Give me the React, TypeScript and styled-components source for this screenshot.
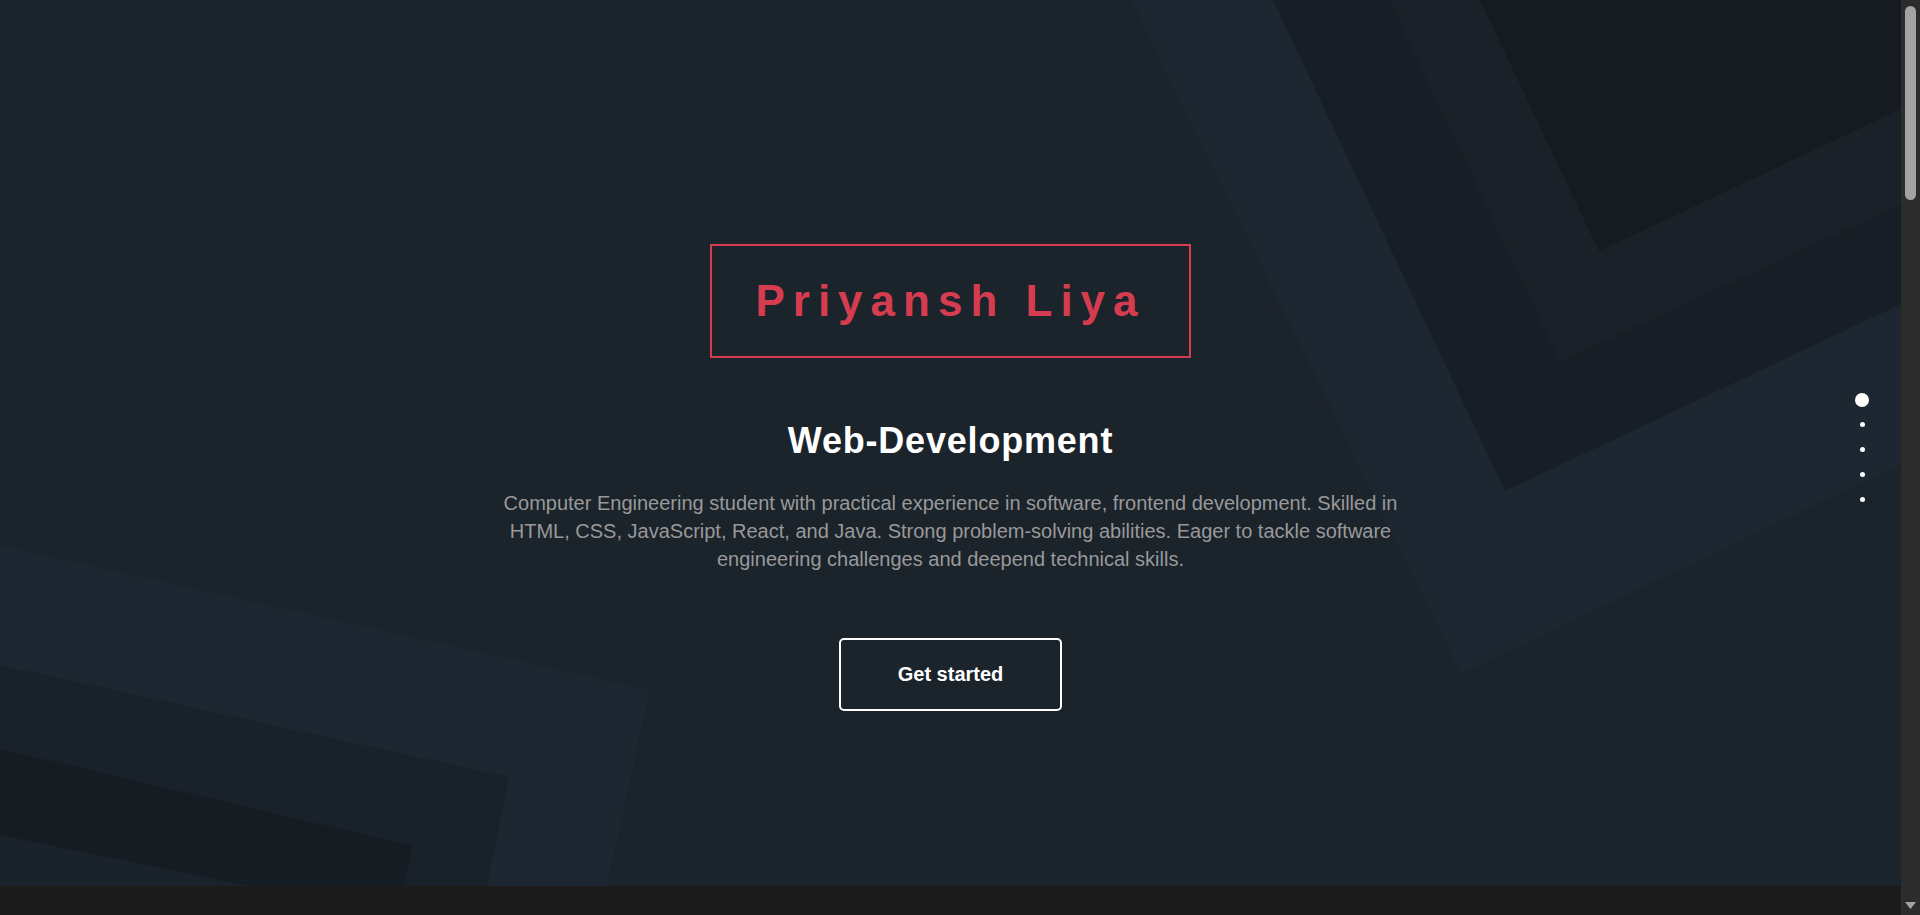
import React from "react";
import styled, { createGlobalStyle } from "styled-components";

const GlobalStyle = createGlobalStyle`
  body {
    margin: 0;
    background: #1b1b1b;
    font-family: "Liberation Sans", Arial, sans-serif;
  }
  * {
    box-sizing: border-box;
  }
`;

const Page = styled.main`
  display: flex;
  flex-direction: column;
  margin-right: 19px;
`;

const Hero = styled.section`
  position: relative;
  height: 886px;
  overflow: hidden;
  background: #1b232b;
`;

const Backdrop = styled.svg`
  position: absolute;
  inset: 0;
  width: 100%;
  height: 100%;
  z-index: 0;
`;

const HeroContent = styled.div`
  position: relative;
  z-index: 1;
  display: flex;
  flex-direction: column;
  align-items: center;
  padding-top: 244px;
  text-align: center;
`;

const NameBox = styled.div`
  border: 2px solid #d63c50;
  padding: 30px 43px;
`;

const Name = styled.h1`
  margin: 0;
  color: #d63c50;
  font-size: 44px;
  font-weight: 700;
  letter-spacing: 8px;
  line-height: normal;
`;

const Role = styled.h2`
  margin: 62px 0 0;
  color: #ffffff;
  font-size: 36px;
  font-weight: 700;
  letter-spacing: 0.8px;
  line-height: normal;
`;

const Summary = styled.p`
  margin: 27px 0 0;
  max-width: 930px;
  color: #999999;
  font-size: 20px;
  line-height: 28px;
`;

const CtaButton = styled.button`
  margin-top: 65px;
  padding: 23px 57px;
  background: transparent;
  border: 2px solid #ffffff;
  border-radius: 5px;
  color: #ffffff;
  font-family: inherit;
  font-size: 20px;
  font-weight: 700;
  line-height: normal;
  cursor: pointer;
`;

const Section = styled.section`
  height: 837px;
  background: #1b1b1b;
`;

const DotNav = styled.nav`
  position: fixed;
  top: 387px;
  right: 51px;
  z-index: 10;
  display: flex;
  flex-direction: column;
`;

const DotItem = styled.a`
  width: 14px;
  height: 25px;
  display: flex;
  align-items: center;
  justify-content: center;
  cursor: pointer;
`;

const Dot = styled.span<{ $active?: boolean }>`
  display: block;
  width: ${(p) => (p.$active ? "14px" : "5px")};
  height: ${(p) => (p.$active ? "14px" : "5px")};
  border-radius: 50%;
  background: #ffffff;
`;

const ScrollRail = styled.div`
  position: fixed;
  top: 0;
  right: 0;
  bottom: 0;
  width: 19px;
  z-index: 20;
  display: flex;
  flex-direction: column;
  align-items: center;
  padding: 6px 0 6px;
  background: #2c2c2c;
`;

const ScrollThumb = styled.div`
  width: 11px;
  height: 194px;
  border-radius: 6px;
  background: #a3a3a3;
`;

const ScrollArrow = styled.svg`
  margin-top: auto;
  display: block;
`;

const HeroBackdrop = () => (
  <Backdrop viewBox="0 0 1901 886" preserveAspectRatio="none" aria-hidden="true">
    {/* top-right layered chevrons */}
    <polygon points="1131,0 1461,674 1901,464 1901,0" fill="#1c2731" />
    <polygon points="1273,0 1505,491 1901,304 1901,0" fill="#171e25" />
    <polygon points="1389,0 1560,362 1901,204 1901,0" fill="#1a2129" />
    <polygon points="1480,0 1599,251 1901,109 1901,0" fill="#151b21" />
    {/* bottom-left layered corner */}
    <polygon points="0,545 650,690 607,886 0,886" fill="#1c2731" />
    <polygon points="0,665 509,777 487,886 0,886" fill="#19222a" />
    <polygon points="0,749 412,846 404,886 0,886" fill="#151c22" />
    <polygon points="0,835 250,886 0,886" fill="#1a232c" />
  </Backdrop>
);

const sections = ["home", "about", "skills", "projects", "contact"];

export default function App() {
  return (
    <>
      <GlobalStyle />
      <Page>
        <Hero id="home">
          <HeroBackdrop />
          <HeroContent>
            <NameBox>
              <Name>Priyansh Liya</Name>
            </NameBox>
            <Role>Web-Development</Role>
            <Summary>
              Computer Engineering student with practical experience in software, frontend development. Skilled in
              HTML, CSS, JavaScript, React, and Java. Strong problem-solving abilities. Eager to tackle software
              engineering challenges and deepend technical skills.
            </Summary>
            <CtaButton type="button">Get started</CtaButton>
          </HeroContent>
        </Hero>
        <Section id="about" />
        <Section id="skills" />
        <Section id="projects" />
        <Section id="contact" />
      </Page>
      <DotNav>
        {sections.map((s, i) => (
          <DotItem key={s} href={`#${s}`} aria-label={s}>
            <Dot $active={i === 0} />
          </DotItem>
        ))}
      </DotNav>
      <ScrollRail aria-hidden="true">
        <ScrollThumb />
        <ScrollArrow width="11" height="7" viewBox="0 0 11 7">
          <polygon points="0,0 11,0 5.5,7" fill="#a3a3a3" />
        </ScrollArrow>
      </ScrollRail>
    </>
  );
}
